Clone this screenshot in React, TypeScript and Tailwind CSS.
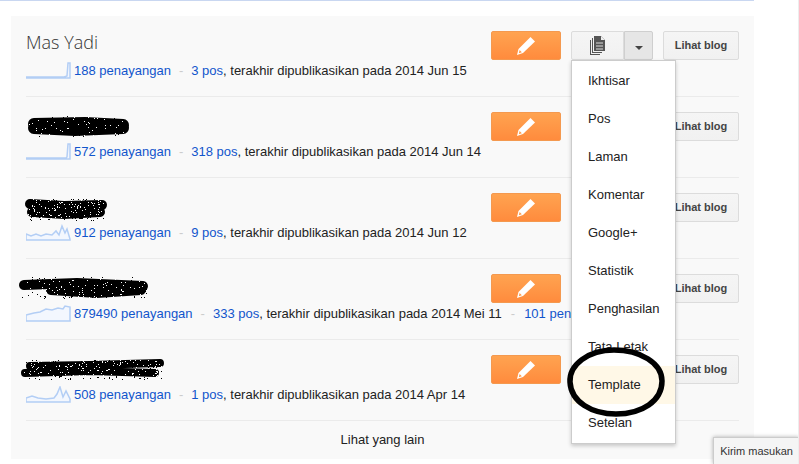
import { useMemo } from 'react';

interface Blog {
  name?: string;
  views: string;
  posts: string;
  date: string;
  pages?: string;
  spark: string;
  scribble?: { w: number; h: number; left: number; top: number; lines: string[]; thick: number; specks: number; seed: number };
}

const blogs: Blog[] = [
  {
    name: 'Mas Yadi',
    views: '188',
    posts: '3',
    date: '2014 Jun 15',
    spark: 'M0 15 L30 15 L38 15 L41 14 L42 1 L44 1 L44 16 L0 16 Z',
  },
  {
    views: '572',
    posts: '318',
    date: '2014 Jun 14',
    spark: 'M0 15 L30 15 L40 15 L41 14 L42 1 L44 1 L44 16 L0 16 Z',
    scribble: { w: 108, h: 25, left: -1, top: 17, lines: ['M9 10 L60 9 L98 11', 'M9 14 L50 16 L98 14'], thick: 12, specks: 50, seed: 7 },
  },
  {
    views: '912',
    posts: '9',
    date: '2014 Jun 12',
    spark: 'M0 10 L5 12 L10 10 L15 12 L20 10 L26 11 L30 7 L33 11 L36 2 L39 9 L41 5 L44 15 L44 16 L0 16 Z',
    scribble: { w: 84, h: 26, left: -2, top: 19, lines: ['M6 7 L40 9 L78 8', 'M8 15 L40 17 L76 15'], thick: 10, specks: 130, seed: 23 },
  },
  {
    views: '879490',
    posts: '333',
    date: '2014 Mei 11',
    pages: '101',
    spark: 'M0 10 L8 8 L14 7 L20 4 L26 5 L32 3 L37 4 L39 1 L44 2 L44 16 L0 16 Z',
    scribble: { w: 134, h: 26, left: -9, top: 16, lines: ['M7 10 L60 8 L126 11', 'M34 15 L80 18 L124 15'], thick: 10, specks: 110, seed: 41 },
  },
  {
    views: '508',
    posts: '1',
    date: '2014 Apr 14',
    spark: 'M0 12 L6 10 L12 12 L20 13 L28 12 L31 8 L34 1 L37 11 L40 5 L44 13 L44 16 L0 16 Z',
    scribble: { w: 146, h: 24, left: -6, top: 18, lines: ['M10 8 L70 7 L140 5', 'M5 15 L70 13 L135 15'], thick: 8, specks: 170, seed: 59 },
  },
];

const menu = ['Ikhtisar', 'Pos', 'Laman', 'Komentar', 'Google+', 'Statistik', 'Penghasilan', 'Tata Letak', 'Template', 'Setelan'];

// marker scribble that hides the blog name, with dithered specks like the screenshot
function Scribble({ w, h, left, top, lines, thick, specks, seed }: NonNullable<Blog['scribble']>) {
  const dots = useMemo(() => {
    let s = seed;
    const next = () => {
      s = (s * 1103515245 + 12345) & 0x7fffffff;
      return s / 0x7fffffff;
    };
    return Array.from({ length: specks * 2 }, (_, i) => ({
      x: Math.floor(next() * (w - 8)) + 4,
      y: Math.floor(next() * (h - 4)) + 2,
      white: i % 2 === 0,
    }));
  }, [w, h, specks, seed]);

  return (
    <svg className="absolute" style={{ left, top }} width={w} height={h} viewBox={`0 0 ${w} ${h}`}>
      {lines.map((d) => (
        <path key={d} d={d} fill="none" stroke="#000" strokeWidth={thick} strokeLinecap="round" />
      ))}
      {dots.map((p, i) => (
        <rect key={i} x={p.x} y={p.y} width="1" height="1" fill={p.white ? '#f9f9f9' : '#000'} shapeRendering="crispEdges" />
      ))}
    </svg>
  );
}

function Spark({ d }: { d: string }) {
  return (
    <svg className="shrink-0" width="45" height="17" viewBox="0 0 45 17">
      <path d={d} fill="#f3f7fe" stroke="#b3cef5" strokeWidth="1.5" />
    </svg>
  );
}

function Pencil() {
  return (
    <svg width="20" height="20" viewBox="0 0 20 20">
      <path d="M14.5 1 L19 5.5 L7 17 L1 19 L2.5 13 Z" fill="#fff" />
      <path d="M3.6 14 L5.8 16.2 L2.8 17.2 Z" fill="#ff9a4a" />
    </svg>
  );
}

function Pages() {
  return (
    <svg width="17" height="19" viewBox="0 0 17 19">
      <path d="M5 0 H12 L16 4 V15 H5 Z" fill="#555" />
      <path d="M12 0 V4 H16 Z" fill="#eee" />
      <path d="M3 2 H4 V16 H13 V17 H3 Z" fill="#555" />
      <path d="M1 4 H2 V18 H11 V19 H1 Z" fill="#555" />
      <path d="M7 7 H14 M7 10 H14 M7 13 H14" stroke="#ddd" strokeWidth="1" />
    </svg>
  );
}

export default function App() {
  return (
    <div
      className="relative h-[464px] w-[799px] overflow-hidden border-r border-[#ededed] bg-white text-[13px] text-[#222]"
      style={{ fontFamily: '"Liberation Sans", Arial, sans-serif' }}
    >
      <div className="h-px w-[754px] bg-[#c9d7f1]" />
      <div className="ml-[11px] mt-[15px] h-[443px] w-[743px] bg-[#f9f9f9] px-[15px]">
        {blogs.map((blog) => (
          <div key={blog.views} className="relative h-[81px] border-b border-[#ebebeb] pt-[15px]">
            <div className="flex h-[29px] items-start justify-between">
              <div className="-mt-px text-[18px] font-light leading-6 text-[#333]" style={{ fontFamily: '"Open Sans", sans-serif' }}>
                {blog.name}
              </div>
              <div className="flex gap-[10px]">
                <button className="flex h-[29px] w-[70px] items-center justify-center rounded-[2px] border border-[#f4994f] bg-gradient-to-b from-[#ffa350] to-[#ff8b3d]">
                  <Pencil />
                </button>
                <div className="flex h-[29px] w-[82px]">
                  <button className="flex w-[53px] items-center justify-center rounded-l-[2px] border border-[#dcdcdc] bg-gradient-to-b from-[#f5f5f5] to-[#f1f1f1]">
                    <Pages />
                  </button>
                  <button className="flex w-[29px] items-center justify-center rounded-r-[2px] border border-[#cfcfcf] bg-[#e6e6e6] pt-[5px]">
                    <span className="h-0 w-0 border-x-[4px] border-t-[4px] border-x-transparent border-t-[#444]" />
                  </button>
                </div>
                <button className="h-[29px] w-[76px] rounded-[2px] border border-[#dcdcdc] bg-gradient-to-b from-[#f5f5f5] to-[#f1f1f1] text-[11px] font-bold text-[#444]">
                  Lihat blog
                </button>
              </div>
            </div>
            <div className="mt-px flex h-[19px] items-center whitespace-nowrap">
              <Spark d={blog.spark} />
              <a className="ml-[3px] text-[#1155cc]">{blog.views} penayangan</a>
              <span className="mx-[8px] text-[#ccc]">-</span>
              <a className="text-[#1155cc]">{blog.posts} pos</a>
              <span>, terakhir dipublikasikan pada {blog.date}</span>
              {blog.pages && (
                <>
                  <span className="mx-[9px] text-[#ccc]">-</span>
                  <a className="text-[#1155cc]">{blog.pages} pen</a>
                </>
              )}
            </div>
            {blog.scribble && <Scribble {...blog.scribble} />}
          </div>
        ))}
        <div className="flex h-[38px] items-center justify-center">Lihat yang lain</div>
      </div>

      {/* open dropdown */}
      <div className="absolute left-[571px] top-[60px] w-[105px] border border-[#ccc] bg-white py-px shadow-[0_2px_4px_rgba(0,0,0,0.2)]">
        {menu.map((item) => (
          <div
            key={item}
            className={`flex h-[38px] items-center pl-4 text-[#222] ${item === 'Template' ? 'bg-[#fff8e7]' : ''}`}
          >
            {item}
          </div>
        ))}
      </div>

      {/* hand drawn circle around Template */}
      <svg className="absolute left-[562px] top-[343px]" width="108" height="78" viewBox="0 0 108 78">
        <path
          d="M8 39 C7 22 26 7 52 7 C78 7 100 20 100 38 C100 58 80 71 54 71 C30 71 9 59 8 39 Z"
          fill="none"
          stroke="#000"
          strokeWidth="5.5"
        />
      </svg>

      <div className="absolute left-[713px] top-[437px] flex h-[27px] w-[86px] items-center justify-center border-l border-t border-[#ccc] bg-[#f5f5f5] text-[11px] text-[#333] shadow-[0_0_4px_rgba(0,0,0,0.3)]">
        Kirim masukan
      </div>
    </div>
  );
}
